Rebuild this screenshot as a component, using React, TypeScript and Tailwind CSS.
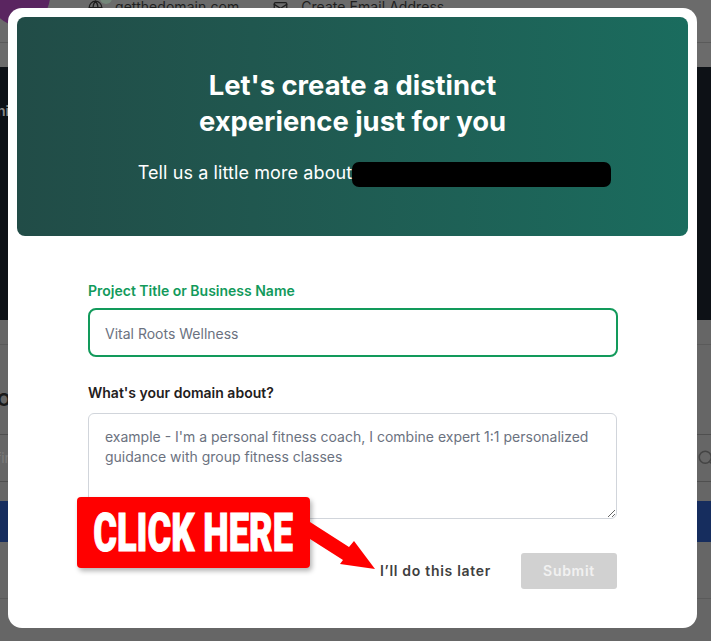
import { Globe, Mail, Search } from "lucide-react";

const INTER = "font-['Inter',sans-serif]";

function BackgroundPage() {
  return (
    <div className={`h-[641px] w-[711px] overflow-hidden bg-[#666666] ${INTER}`} aria-hidden>
      {/* Top bar, its text is mostly hidden behind the modal */}
      <div className="h-[43px] border-b border-[#5a5a5a] bg-[#6b6b6b]">
        <div className="flex h-[14px] items-center pl-[88px] text-sm tracking-[0.05px] text-[#1f1f1f]">
          <Globe size={15} />
          <span className="ml-[12px]">getthedomain.com</span>
          <Mail size={15} className="ml-[34px]" />
          <span className="ml-[13px]">Create Email Address</span>
        </div>
      </div>
      <div className="h-[24px] bg-[#6b6b6b]" />
      {/* Dark hero */}
      <div className="h-[253px] bg-[#0d1116] pt-[34px] text-sm font-semibold text-[#8a8a8a]">
        <span className="-ml-[3px]">ni</span>
      </div>
      <div className="h-[25px] border-b border-[#5a5a5a] bg-[#666666]" />
      <div className="h-[90px] border-b border-[#4f4f4f] pt-[41px] text-lg font-bold text-[#1a1a1a]">
        <span className="-ml-[3px]">OI</span>
      </div>
      {/* Search row */}
      <div className="flex h-[47px] items-center justify-between border-b border-[#4f4f4f] text-sm text-[#7c7c7c]">
        <span className="-ml-[4px]">fin</span>
        <Search size={18} className="-mr-[4px] text-[#444444]" />
      </div>
      <div className="h-[19px]" />
      <div className="h-[41px] bg-[#162d5e]" />
      <div className="h-[57px] border-b border-[#5a5a5a]" />
    </div>
  );
}

function ClickHereCallout() {
  return (
    <>
      <div className="absolute top-[497px] left-[77px] flex h-[71px] w-[233px] items-center justify-center overflow-hidden rounded-[4px] bg-[#ff0000] shadow-[2px_3px_5px_rgba(0,0,0,0.3)]">
        <span className="origin-center scale-x-[0.67] whitespace-nowrap font-['Roboto',sans-serif] text-[54px] leading-none font-black text-white [-webkit-text-stroke:1px_white]">
          CLICK HERE
        </span>
      </div>
      <svg className="absolute top-[515px] left-[305px]" width="75" height="60" viewBox="305 515 75 60" aria-hidden>
        <polygon
          points="305,519 310,522 349,547 354,541 375,569 340,564 343,560 310,539 305,536"
          fill="#ff0000"
        />
      </svg>
    </>
  );
}

function OnboardingModal() {
  return (
    <div className={`absolute top-[8px] left-[8px] flex h-[620px] w-[689px] flex-col rounded-[14px] bg-white p-[9px] ${INTER}`}>
      <div className="flex h-[219px] flex-col items-center rounded-[8px] bg-gradient-to-r from-[#214c47] to-[#1a6c5e] pt-[50px] text-white">
        <h1 className="text-center text-[27.4px] leading-[36px] font-bold">
          Let's create a distinct
          <br />
          experience just for you
        </h1>
        <div className="relative mt-[21px] ml-[44px] flex items-center text-[18px] leading-[28px] tracking-[0.1px]">
          <span className="-translate-y-[1px]">Tell us a little more about</span>
          <span className="h-[25px] w-[259px] rounded-[7px] bg-black" />
        </div>
      </div>

      <form className="flex flex-1 flex-col pr-[71px] pl-[71px]">
        <label className="mt-[45px] text-sm leading-5 font-semibold text-[#129a5b]">
          Project Title or Business Name
        </label>
        <input
          readOnly
          placeholder="Vital Roots Wellness"
          className="mt-[7px] h-[49px] w-[530px] rounded-[8px] border-2 border-[#129a5b] px-[15px] pt-[1px] text-sm text-[#6b7280] outline-none placeholder:text-[#6b7280]"
        />
        <label className="mt-[26px] text-sm leading-5 font-semibold text-[#1f2020]">
          What's your domain about?
        </label>
        <textarea
          readOnly
          placeholder="example - I'm a personal fitness coach, I combine expert 1:1 personalized guidance with group fitness classes"
          className="mt-[10px] h-[106px] w-[529px] rounded-[6px] border border-[#d1d5db] px-[16px] pt-[13px] text-sm leading-5 outline-none placeholder:text-[#6b7280]"
        />
        <div className="mt-[34px] flex w-[529px] items-center justify-end">
          <button type="button" className="text-sm font-semibold tracking-[0.7px] text-[#3f3f3f]">
            I’ll do this later
          </button>
          <button
            type="button"
            className="ml-[30px] h-[36px] w-[96px] rounded-[3px] bg-[#d1d1d1] text-sm font-semibold tracking-[0.7px] text-[#f1f1f1]"
          >
            Submit
          </button>
        </div>
      </form>
    </div>
  );
}

export default function App() {
  return (
    <div className="relative h-[641px] w-[711px] overflow-hidden">
      <BackgroundPage />
      {/* blobs in the page header */}
      <div className="absolute -top-[34px] -left-[10px] size-[60px] rounded-full bg-[#5a2560]" />
      <div className="absolute -top-[8px] left-[100px] size-[12px] rounded-full bg-[#74877a]" />
      <OnboardingModal />
      <ClickHereCallout />
    </div>
  );
}
